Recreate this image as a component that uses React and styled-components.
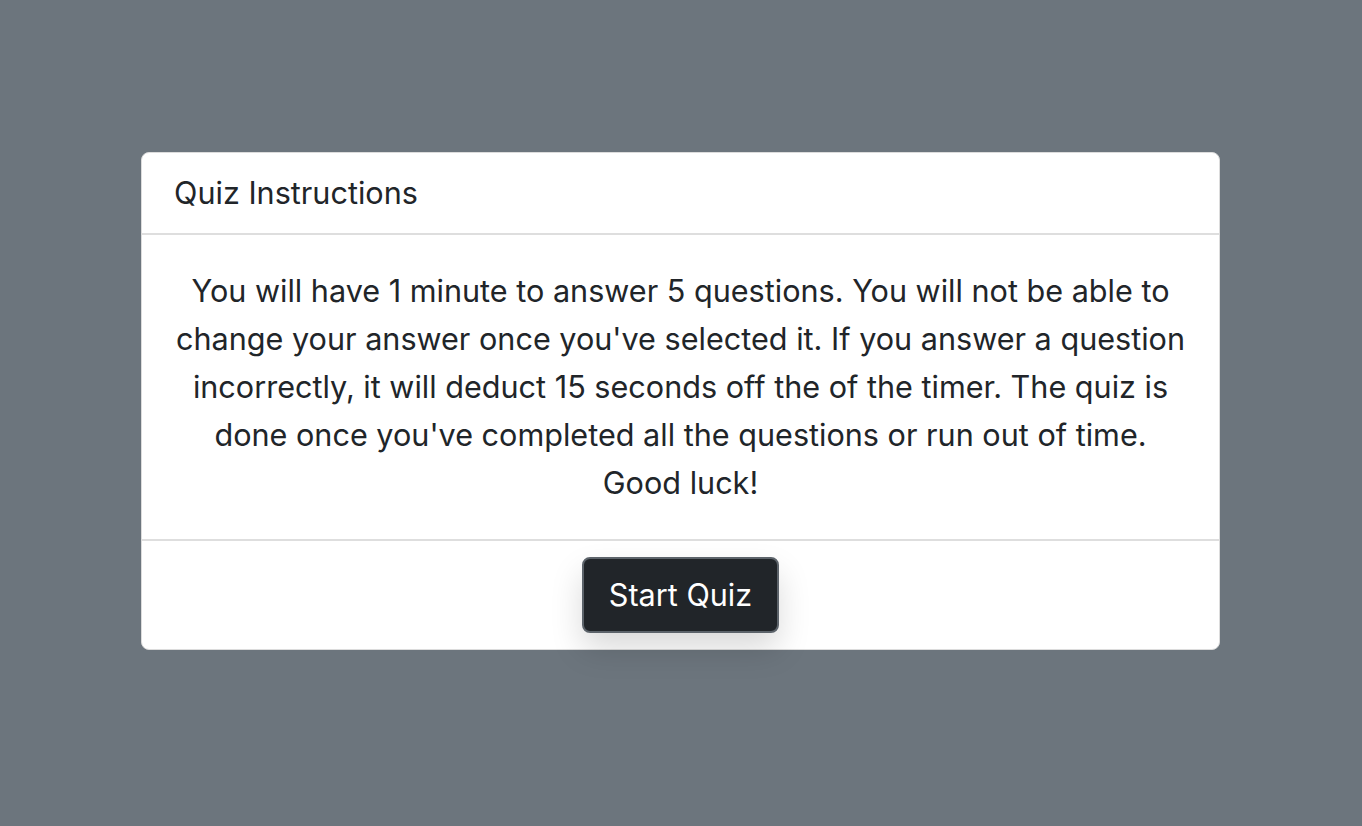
import React from 'react';
import styled, { createGlobalStyle } from 'styled-components';

const GlobalStyle = createGlobalStyle`
  html, body {
    margin: 0;
    padding: 0;
    background: #6c757d;
    font-family: Inter, "Noto Sans", "Liberation Sans", sans-serif;
    color: #212529;
  }
`;

const Page = styled.main`
  min-height: 826px;
  padding: 152px 0 0 141px;
  box-sizing: border-box;
`;

const Card = styled.section`
  width: 1079px;
  background: #fff;
  border: 1px solid #dcdcdc;
  border-radius: 8px;
  box-sizing: border-box;
`;

const CardHeader = styled.header`
  padding: 16px 32px;
  font-size: 30.6px;
  line-height: 48px;
  border-bottom: 2px solid #dedede;
`;

const CardBody = styled.div`
  padding: 32px;
  text-align: center;
  font-size: 30.6px;
  line-height: 48px;
`;

const CardFooter = styled.footer`
  padding: 16px 32px;
  border-top: 2px solid #dedede;
  display: flex;
  justify-content: center;
`;

const StartButton = styled.button`
  font-family: inherit;
  font-size: 30.6px;
  line-height: 48px;
  padding: 12px 25px;
  color: #fff;
  background: #212529;
  border: 2px solid #5c636a;
  border-radius: 8px;
  box-shadow: 0 16px 32px rgba(0, 0, 0, 0.15);
  cursor: pointer;
`;

export default function App() {
  return (
    <>
      <GlobalStyle />
      <Page>
        <Card>
          <CardHeader>Quiz Instructions</CardHeader>
          <CardBody>
            You will have 1 minute to answer 5 questions. You will not be able to
            change your answer once you've selected it. If you answer a question
            incorrectly, it will deduct 15 seconds off the of the timer. The quiz is
            done once you've completed all the questions or run out of time.
            Good luck!
          </CardBody>
          <CardFooter>
            <StartButton>Start Quiz</StartButton>
          </CardFooter>
        </Card>
      </Page>
    </>
  );
}
